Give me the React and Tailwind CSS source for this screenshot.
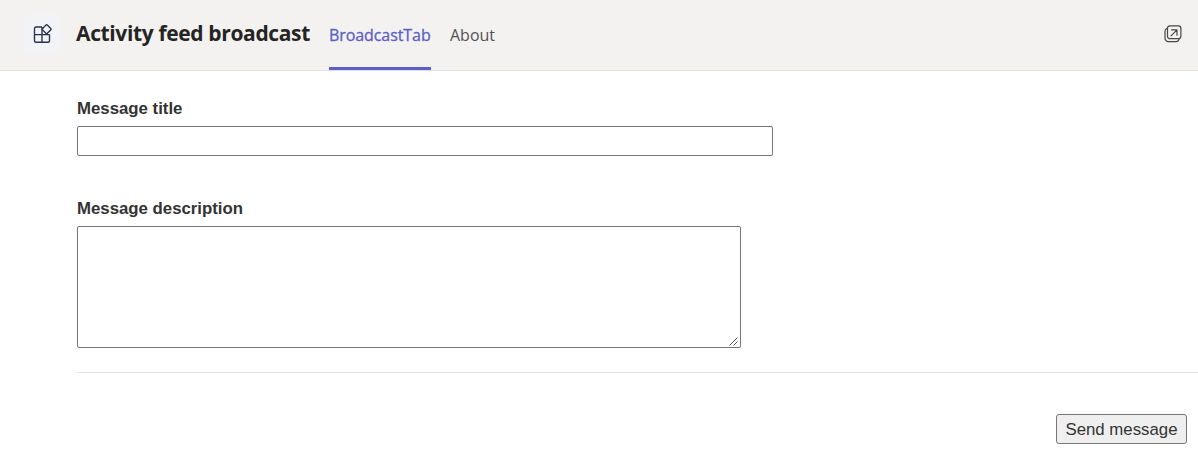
function AppIcon() {
  return (
    <div className="flex h-[39px] w-[38px] items-center justify-center rounded-md bg-[#f1f3f6]">
      <svg width="20" height="20" viewBox="0 0 20 20" fill="none" stroke="#27314d" strokeWidth="1.35" strokeLinejoin="round">
        <path d="M10 3H4a1.500 1.500 0 0 0-1.500 1.500v12.200a1.500 1.500 0 0 0 1.500 1.500h12a1.500 1.500 0 0 0 1.500-1.500V10.500M10 3v15.200M2.500 10.600h15" />
        <path fill="#f1f3f6" d="m13.900 1.100-3.300 3.400a1 1 0 0 0 0 1.400l3.300 3.400a1 1 0 0 0 1.400 0l3.400-3.400a1 1 0 0 0 0-1.400l-3.400-3.400a1 1 0 0 0-1.400 0Z" />
      </svg>
    </div>
  );
}

function PopOutIcon() {
  return (
    <svg width="18" height="18" viewBox="0 0 18 18" fill="none" stroke="#484644" strokeWidth="1.2" strokeLinecap="round" strokeLinejoin="round">
      <rect x="3.5" y="0.9" width="13.400" height="12.800" rx="2.500" />
      <path d="M3.300 3.200C2 3.700 1 4.500 1 6v7.200A3.400 3.400 0 0 0 4.400 16.600h8c1.400 0 2.300-1 2.700-2.500M7 10.800l6-6M7.500 4.800H13v5.400" />
    </svg>
  );
}

function ResizeGrip() {
  return (
    <svg className="pointer-events-none absolute right-[3px] bottom-[2px]" width="9" height="9" viewBox="0 0 9 9" stroke="#555555" strokeWidth="1">
      <path d="M0.500 8.500l8-8M4.500 8.500l4-4" />
    </svg>
  );
}

export default function App() {
  return (
    <div className="h-[458px] overflow-hidden bg-white font-['Liberation_Sans',sans-serif] text-[#333333]">
      <header className="flex h-[71px] items-stretch border-b border-[#e1e1e1] bg-[#f3f2f1] pr-4 pl-[23px] font-['Open_Sans',sans-serif]">
        <div className="flex items-start pt-[14px]">
          <AppIcon />
        </div>
        <h1 className="ml-[15px] w-[253px] pt-[17px] text-[21px] leading-8 font-bold tracking-[-0.360px] whitespace-nowrap text-[#252423]">
          Activity feed broadcast
        </h1>
        <nav className="flex gap-[19px] text-[16px] leading-6 whitespace-nowrap">
          <a className="w-[102px] border-b-[3px] border-[#5b5fc7] pt-[23px] tracking-[-0.080px] text-[#5b5fc7] [-webkit-text-stroke:0.3px_#5b5fc7]">BroadcastTab</a>
          <a className="pt-[23px] tracking-[0px] text-[#555351]">About</a>
        </nav>
        <button className="ml-auto flex items-start pt-[25px]" aria-label="Pop out">
          <PopOutIcon />
        </button>
      </header>
      <main className="flex flex-col pt-[26px] pl-[77px]">
        <label className="text-[16.800px] leading-6 font-bold" htmlFor="title">Message title</label>
        <input id="title" className="mt-[5px] h-[30px] w-[696px] rounded-[2px] border border-[#767676] bg-white px-1" />
        <label className="mt-[41px] text-[16.800px] leading-6 font-bold" htmlFor="description">Message description</label>
        <div className="relative mt-[5px] h-[122px] w-[664px]">
          <textarea id="description" className="block size-full resize-none rounded-[2px] border border-[#767676] bg-white p-1" />
          <ResizeGrip />
        </div>
        <div className="mt-6 flex justify-end border-t border-[#e1e1e1] pt-[41px] pr-[11px]">
          <button className="h-[30px] w-[131px] rounded-[3px] border border-[#767676] bg-[#efefef] pt-[2px] text-[16.800px] leading-[26px] whitespace-nowrap">
            Send message
          </button>
        </div>
      </main>
    </div>
  );
}
